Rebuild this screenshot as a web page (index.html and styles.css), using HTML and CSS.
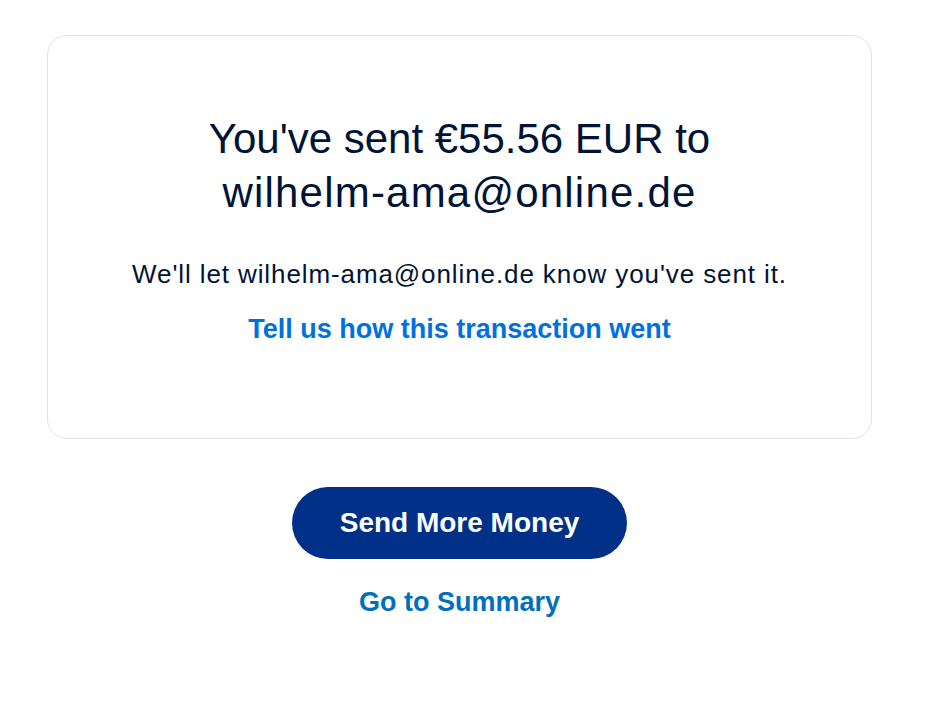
FILE: index.html
```html
<!DOCTYPE html>
<html lang="en">
<head>
<meta charset="utf-8">
<title>Payment sent</title>
<link rel="stylesheet" href="styles.css">
</head>
<body>
<main class="page">
  <section class="card">
    <h1 class="title">You've sent €55.56 EUR to<br><span class="title-line2">wilhelm-ama@online.de</span></h1>
    <p class="note">We'll let wilhelm-ama@online.de know you've sent it.</p>
    <a class="feedback" href="#">Tell us how this transaction went</a>
  </section>
  <div class="actions">
    <a class="btn-primary" href="#">Send More Money</a>
    <a class="link-summary" href="#">Go to Summary</a>
  </div>
</main>
</body>
</html>
```
FILE: styles.css
```css
* { box-sizing: border-box; }
html, body { margin: 0; padding: 0; background: #ffffff; }
body {
  font-family: "Liberation Sans", Arial, sans-serif;
  color: #001435;
}
.page {
  padding: 35px 60px 0 47px;
}
.card {
  border: 1px solid #e3e3e3;
  border-radius: 20px;
  padding: 76px 30px 93px;
  display: flex;
  flex-direction: column;
  align-items: center;
  text-align: center;
}
.title {
  margin: 0;
  font-size: 42px;
  line-height: 54px;
  font-weight: 400;
  color: #001435;
}
.title-line2 { letter-spacing: 1.2px; }
.note {
  margin: 38px 0 0;
  font-size: 26px;
  line-height: 32px;
  letter-spacing: 0.9px;
  color: #001435;
}
.feedback {
  margin-top: 23px;
  font-size: 27px;
  line-height: 32px;
  font-weight: 700;
  color: #0070e0;
  text-decoration: none;
}
.actions {
  display: flex;
  flex-direction: column;
  align-items: center;
}
.btn-primary {
  margin-top: 48px;
  width: 335px;
  height: 72px;
  border-radius: 36px;
  background: #003087;
  color: #ffffff;
  font-size: 28px;
  font-weight: 700;
  display: flex;
  align-items: center;
  justify-content: center;
  text-decoration: none;
}
.link-summary {
  margin-top: 27px;
  font-size: 27px;
  line-height: 32px;
  font-weight: 700;
  color: #0070ba;
  text-decoration: none;
}
```
